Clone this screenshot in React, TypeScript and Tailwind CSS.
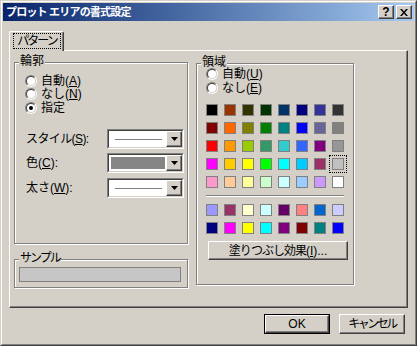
import React from 'react';

const TOP_COLORS = [
  'bg-[#000000]', 'bg-[#993300]', 'bg-[#333300]', 'bg-[#003300]', 'bg-[#003366]', 'bg-[#000080]', 'bg-[#333399]', 'bg-[#333333]',
  'bg-[#800000]', 'bg-[#ff6600]', 'bg-[#808000]', 'bg-[#008000]', 'bg-[#008080]', 'bg-[#0000ff]', 'bg-[#666699]', 'bg-[#808080]',
  'bg-[#ff0000]', 'bg-[#ff9900]', 'bg-[#99cc00]', 'bg-[#339966]', 'bg-[#33cccc]', 'bg-[#3366ff]', 'bg-[#800080]', 'bg-[#969696]',
  'bg-[#ff00ff]', 'bg-[#ffcc00]', 'bg-[#ffff00]', 'bg-[#00ff00]', 'bg-[#00ffff]', 'bg-[#00ccff]', 'bg-[#993366]', 'bg-[#c0c0c0]',
  'bg-[#ff99cc]', 'bg-[#ffcc99]', 'bg-[#ffff99]', 'bg-[#ccffcc]', 'bg-[#ccffff]', 'bg-[#99ccff]', 'bg-[#cc99ff]', 'bg-[#ffffff]',
];

const CHART_COLORS = [
  'bg-[#9999ff]', 'bg-[#993366]', 'bg-[#ffffcc]', 'bg-[#ccffff]', 'bg-[#660066]', 'bg-[#ff8080]', 'bg-[#0066cc]', 'bg-[#ccccff]',
  'bg-[#000080]', 'bg-[#ff00ff]', 'bg-[#ffff00]', 'bg-[#00ffff]', 'bg-[#800080]', 'bg-[#800000]', 'bg-[#008080]', 'bg-[#0000ff]',
];

const SELECTED = 31;

// classic raised 3d edge
const RAISED = 'border border-t-white border-l-white border-r-[#404040] border-b-[#404040] shadow-[inset_-1px_-1px_0_#808080] bg-[#d4d0c8]';

const Radio = ({ checked, children }: { checked?: boolean; children: React.ReactNode }) => (
  <div className="flex items-center h-[12px]">
    <span className="relative shrink-0 w-[12px] h-[12px] rounded-full border border-t-[#808080] border-l-[#808080] border-b-white border-r-white">
      <span className="absolute inset-0 rounded-full border border-t-[#404040] border-l-[#404040] border-b-[#d4d0c8] border-r-[#d4d0c8] bg-white flex items-center justify-center">
        {checked && <span className="w-[4px] h-[4px] rounded-full bg-black" />}
      </span>
    </span>
    <span className="ml-[4px] text-[12px] leading-[12px] whitespace-nowrap">{children}</span>
  </div>
);

const Group = ({ label, className, labelClass, children }: { label: string; className: string; labelClass?: string; children?: React.ReactNode }) => (
  <div className={`relative border border-[#808080] shadow-[inset_1px_1px_0_#fff,1px_1px_0_#fff] ${className}`}>
    <span className={`absolute -top-[8px] left-[4px] bg-[#d4d0c8] px-[1px] text-[12px] leading-[13px] whitespace-nowrap ${labelClass ?? ''}`}>{label}</span>
    {children}
  </div>
);

const DropButton = () => (
  <div className={`w-[16px] h-full flex items-center justify-center ${RAISED}`}>
    <svg width="7" height="4" viewBox="0 0 7 4">
      <path d="M0 0h7L3.5 4z" fill="#000" />
    </svg>
  </div>
);

const Combo = ({ children }: { children: React.ReactNode }) => (
  <div className="w-[77px] h-[20px] border border-t-[#808080] border-l-[#808080] border-b-white border-r-white">
    <div className="h-full flex border border-t-[#404040] border-l-[#404040] border-b-[#d4d0c8] border-r-[#d4d0c8] bg-white">
      <div className="flex-1 flex items-center">{children}</div>
      <DropButton />
    </div>
  </div>
);

const LineSample = () => <div className="ml-[6px] mr-[4px] flex-1 h-[1px] bg-[#808080]" />;

const Swatch = ({ color, selected }: { color: string; selected?: boolean }) => (
  <div className="relative w-[12px] h-[12px]">
    {selected && <div className="absolute -inset-[3px] border border-dotted border-black" />}
    <div className={`w-full h-full border border-[#808080] ${color}`} />
  </div>
);

export default function App() {
  return (
    <div className="w-[417px] h-[346px] bg-[#d4d0c8] text-black border border-t-[#d4d0c8] border-l-[#d4d0c8] border-r-[#404040] border-b-[#404040] font-['Liberation_Sans','Noto_Sans_CJK_JP',sans-serif]">
      <div className="h-full flex flex-col p-[1px] border border-t-white border-l-white border-r-[#808080] border-b-[#808080]">
        {/* title bar */}
        <div className="h-[18px] shrink-0 flex items-center bg-linear-to-r from-[#0a246a] to-[#a6caf0]">
          <span className="pl-[3px] text-white font-bold text-[11px] leading-[12px] tracking-[-0.8px] whitespace-pre">プロット エリアの書式設定</span>
          <div className="ml-auto mr-[2px] flex gap-[2px]">
            <div className={`w-[16px] h-[14px] flex items-center justify-center ${RAISED}`}>
              <span className="font-bold text-[12px] leading-[11px]">?</span>
            </div>
            <div className={`w-[16px] h-[14px] flex items-center justify-center ${RAISED}`}>
              <svg width="8" height="7" viewBox="0 0 8 7">
                <path d="M0 0h2l2 2.4L6 0h2L5 3.5 8 7H6L4 4.6 2 7H0l3-3.5z" fill="#000" />
              </svg>
            </div>
          </div>
        </div>

        {/* tab */}
        <div className="relative z-10 mt-[10px] ml-[6px] -mb-[1px] w-[55px] h-[20px] bg-[#d4d0c8] border-l border-t border-r border-t-white border-l-white border-r-[#404040] rounded-t-[2px] shadow-[inset_-1px_0_0_#808080]">
          <div className="mt-[1px] ml-[3px] w-[48px] h-[16px] border border-dotted border-black flex items-center justify-center text-[12px] leading-[12px] tracking-[-2px] whitespace-nowrap">
            パターン
          </div>
        </div>

        {/* tab page */}
        <div className="ml-[6px] w-[399px] h-[258px] shrink-0 flex gap-[7px] pl-[4px] pt-[11px] border border-t-white border-l-white border-r-[#404040] border-b-[#404040] shadow-[inset_-1px_-1px_0_#808080]">
          <div className="flex flex-col w-[175px]">
            <Group label="輪郭" className="w-[174px] h-[182px]">
              <div className="pl-[10px] pt-[12px] flex flex-col">
                <Radio>自動(<u>A</u>)</Radio>
                <div className="mt-[1px]"><Radio>なし(<u>N</u>)</Radio></div>
                <div className="mt-[2px]"><Radio checked>指定</Radio></div>
              </div>
              <div className="pl-[11px] mt-[15px] flex flex-col text-[12px] leading-[12px]">
                <div className="flex items-center h-[20px]">
                  <span className="w-[81px] whitespace-nowrap tracking-[-0.6px]">スタイル(<u>S</u>):</span>
                  <Combo><LineSample /></Combo>
                </div>
                <div className="flex items-center h-[20px] mt-[4px]">
                  <span className="w-[81px] whitespace-nowrap">色(<u>C</u>):</span>
                  <Combo><div className="m-[2px] mr-[1px] flex-1 self-stretch bg-[#868686]" /></Combo>
                </div>
                <div className="flex items-center h-[20px] mt-[5px]">
                  <span className="w-[81px] whitespace-nowrap">太さ(<u>W</u>):</span>
                  <Combo><LineSample /></Combo>
                </div>
              </div>
            </Group>
            <Group label="サンプル" labelClass="tracking-[-2px]" className="mt-[15px] w-[174px] h-[29px]">
              <div className="pl-[4px] pt-[7px]">
                <div className="w-[162px] h-[15px] border border-[#808080] bg-[#c6c6c6]" />
              </div>
            </Group>
          </div>

          <Group label="領域" className="mt-[1px] w-[158px] h-[222px]">
            <div className="pl-[9px] pt-[4px] flex flex-col">
              <Radio>自動(<u>U</u>)</Radio>
              <div className="mt-[2px]"><Radio>なし(<u>E</u>)</Radio></div>
              <div className="mt-[10px] grid grid-cols-[repeat(8,12px)] gap-[6px]">
                {TOP_COLORS.map((c, i) => <Swatch key={i} color={c} selected={i === SELECTED} />)}
              </div>
              <div className="mt-[7px] w-[138px] h-[2px] border-t border-t-[#808080] border-b border-b-white" />
              <div className="mt-[7px] grid grid-cols-[repeat(8,12px)] gap-[6px]">
                {CHART_COLORS.map((c, i) => <Swatch key={i} color={c} />)}
              </div>
              <div className={`mt-[7px] ml-[2px] w-[140px] h-[19px] flex items-center justify-center text-[12px] leading-[12px] whitespace-nowrap ${RAISED}`}>
                <span className="tracking-[-1px]">塗りつぶし効果</span>(<u>I</u>)...
              </div>
            </div>
          </Group>
        </div>

        {/* dialog buttons */}
        <div className="mt-[6px] mr-[9px] flex justify-end gap-[9px]">
          <div className="w-[66px] h-[20px] border border-black">
            <div className={`w-full h-full flex items-center justify-center text-[12px] leading-[12px] ${RAISED}`}>OK</div>
          </div>
          <div className={`w-[66px] h-[20px] flex items-center justify-center text-[12px] leading-[12px] tracking-[-2.5px] whitespace-nowrap ${RAISED}`}>キャンセル</div>
        </div>
      </div>
    </div>
  );
}
